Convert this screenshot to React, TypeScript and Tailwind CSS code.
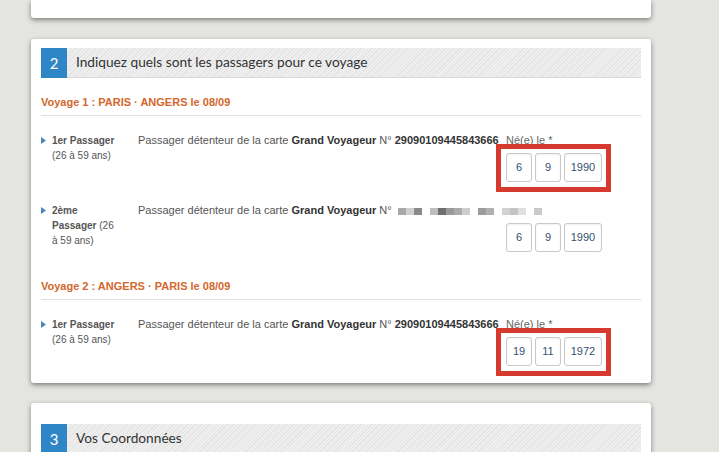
import type { ReactNode } from 'react'

const blur = [
  '#a9a9a9', '#cfcfcf', '#8a8a8a', '#ffffff', '#bdbdbd', '#6f6f6f', '#9a9a9a', '#ababab',
  '#cdcdcd', '#ffffff', '#9c9c9c', '#b0b0b0', '#ffffff', '#d2d2d2', '#c4c4c4', '#e0e0e0', '#ffffff', '#c9c9c9',
]

function Arrow() {
  return (
    <svg width="5" height="7" viewBox="0 0 5 7" className="mt-[4px] shrink-0">
      <path d="M0 0 L5 3.5 L0 7 Z" fill="#4a86bd" />
    </svg>
  )
}

function Box({ w, children }: { w: string; children: ReactNode }) {
  return (
    <div
      className={`${w} flex h-[29px] items-center justify-center rounded-[3px] border border-[#c9c9c9] bg-white text-[11px] text-[#34516f] shadow-[inset_0_1px_2px_rgba(0,0,0,0.06)]`}
    >
      {children}
    </div>
  )
}

function DateBlock({ d, m, y, label, flagged }: { d: string; m: string; y: string; label: boolean; flagged: boolean }) {
  return (
    <div className="w-[135px] shrink-0">
      <p className="h-[15px] text-[11px] leading-[15px] text-[#666]">{label ? 'Né(e) le *' : ''}</p>
      <div className="relative mt-[5px] flex w-fit gap-[3px]">
        <Box w="w-[26px]">{d}</Box>
        <Box w="w-[26px]">{m}</Box>
        <Box w="w-[38px]">{y}</Box>
        {flagged && (
          <div className="pointer-events-none absolute -top-[9px] -bottom-[10px] -left-[10px] -right-[9px] border-[5px] border-[#d63a2f]" />
        )}
      </div>
    </div>
  )
}

function Passenger({
  rank,
  card,
  date,
  flagged,
}: {
  rank: ReactNode
  card: ReactNode
  date: [string, string, string]
  flagged: boolean
}) {
  return (
    <div className="flex">
      <div className="flex w-[97px] shrink-0 gap-[6px]">
        <Arrow />
        <p className="w-[66px] text-[10px] leading-[15px] text-[#555]">{rank}</p>
      </div>
      <p className="min-w-0 flex-1 whitespace-nowrap text-[11px] leading-[15px] text-[#555]">
        Passager détenteur de la carte <b className="text-[#333]">Grand Voyageur</b> N° {card}
      </p>
      <DateBlock d={date[0]} m={date[1]} y={date[2]} label={flagged} flagged={flagged} />
    </div>
  )
}

function Trip({ title }: { title: string }) {
  return (
    <h4 className="border-b border-[#e0e0e0] pb-[6px] text-[11px] leading-[13px] font-bold text-[#d2682c]">{title}</h4>
  )
}

function StepHeader({ n, title }: { n: string; title: string }) {
  return (
    <div className="flex h-[30px]">
      <div className="flex w-[26px] items-center justify-center bg-[#2f86c6] font-['Lato',sans-serif] text-[15px] text-white">
        {n}
      </div>
      <div className="flex flex-1 items-center border-b border-[#d9d9d9] bg-[repeating-linear-gradient(-45deg,#e3e3e3_0px,#e3e3e3_1px,#f0f0f0_1px,#f0f0f0_2.5px)] pl-[9px] font-['Lato',sans-serif] text-[13.7px] text-[#333]">
        {title}
      </div>
    </div>
  )
}

export default function App() {
  return (
    <div className="h-[452px] overflow-hidden bg-[#e4e4e0] font-['Liberation_Sans',Arial,sans-serif]">
      <div className="ml-[31px] h-[18px] w-[620px] rounded-b-[3px] bg-white shadow-[0_2px_5px_rgba(0,0,0,0.45)]" />

      <div className="mt-[21px] ml-[31px] w-[620px] rounded-[3px] bg-white px-[10px] pt-[9px] pb-[17px] shadow-[0_2px_5px_rgba(0,0,0,0.45)]">
        <StepHeader n="2" title="Indiquez quels sont les passagers pour ce voyage" />

        <div className="mt-[18px]">
          <Trip title="Voyage 1 : PARIS · ANGERS le 08/09" />
          <div className="mt-[17px] flex flex-col gap-[21px]">
            <Passenger
              rank={<><b>1er Passager</b><br />(26 à 59 ans)</>}
              card={<b className="text-[#333]">29090109445843666</b>}
              date={['6', '9', '1990']}
              flagged
            />
            <Passenger
              rank={<><b>2ème</b><br /><b>Passager</b> (26<br />à 59 ans)</>}
              card={
                <span className="ml-[3px] inline-flex h-[7px] align-middle">
                  {blur.map((c, i) => (
                    <span key={i} className="inline-block h-[7px] w-[8px]" style={{ backgroundColor: c }} />
                  ))}
                </span>
              }
              date={['6', '9', '1990']}
              flagged={false}
            />
          </div>
        </div>

        <div className="mt-[28px]">
          <Trip title="Voyage 2 : ANGERS · PARIS le 08/09" />
          <div className="mt-[17px]">
            <Passenger
              rank={<><b>1er Passager</b><br />(26 à 59 ans)</>}
              card={<b className="text-[#333]">29090109445843666</b>}
              date={['19', '11', '1972']}
              flagged
            />
          </div>
        </div>
      </div>

      <div className="mt-[20px] ml-[31px] w-[620px] rounded-t-[3px] bg-white px-[10px] pt-[21px] pb-[20px] shadow-[0_2px_5px_rgba(0,0,0,0.45)]">
        <StepHeader n="3" title="Vos Coordonnées" />
      </div>
    </div>
  )
}
